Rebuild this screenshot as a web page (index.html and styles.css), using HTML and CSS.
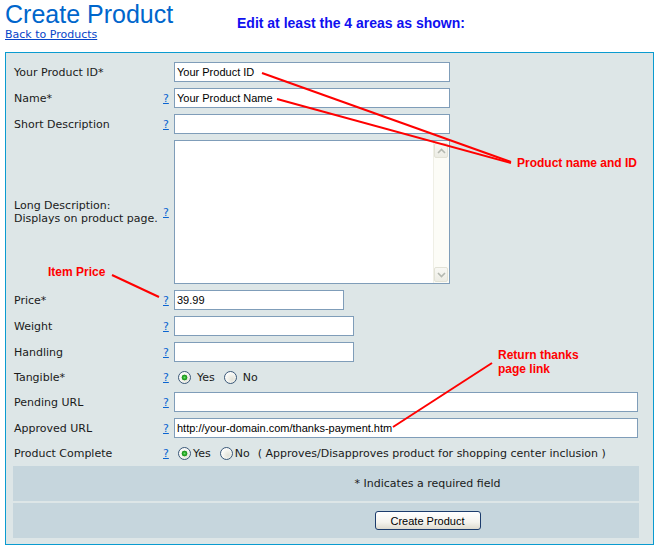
FILE: index.html
```html
<!DOCTYPE html>
<html lang="en">
<head>
<meta charset="utf-8">
<title>Create Product</title>
<link rel="stylesheet" href="styles.css">
</head>
<body>
<div class="page">
  <header class="top">
    <div class="titles">
      <h1 class="title">Create Product</h1>
      <a href="#" class="back">Back to Products</a>
    </div>
    <p class="edit-note">Edit at least the 4 areas as shown:</p>
  </header>

  <form class="panel">
    <div class="fields">
      <div class="row">
        <label class="lbl">Your Product ID*</label><span class="help"></span>
        <div class="ctl"><input class="txt w-lg" type="text" value="Your Product ID"></div>
      </div>
      <div class="row">
        <label class="lbl">Name*</label><a href="#" class="help">?</a>
        <div class="ctl"><input class="txt w-lg" type="text" value="Your Product Name"></div>
      </div>
      <div class="row">
        <label class="lbl">Short Description</label><a href="#" class="help">?</a>
        <div class="ctl"><input class="txt w-lg" type="text" value=""></div>
      </div>
      <div class="row row-tall">
        <label class="lbl lbl-2">Long Description:<br>Displays on product page.</label><a href="#" class="help">?</a>
        <div class="ctl">
          <div class="area-box">
            <textarea class="area"></textarea>
            <div class="vscroll" aria-hidden="true">
              <span class="sb-btn">
                <svg width="9" height="6" viewBox="0 0 9 6"><path d="M1 5 L4.5 1.5 L8 5" fill="none" stroke="#b4b8b0" stroke-width="1.6"/></svg>
              </span>
              <span class="sb-track"></span>
              <span class="sb-btn">
                <svg width="9" height="6" viewBox="0 0 9 6"><path d="M1 1 L4.5 4.5 L8 1" fill="none" stroke="#b4b8b0" stroke-width="1.6"/></svg>
              </span>
            </div>
          </div>
        </div>
      </div>
      <div class="row">
        <label class="lbl">Price*</label><a href="#" class="help">?</a>
        <div class="ctl"><input class="txt w-sm" type="text" value="39.99"></div>
      </div>
      <div class="row">
        <label class="lbl">Weight</label><a href="#" class="help">?</a>
        <div class="ctl"><input class="txt w-md" type="text" value=""></div>
      </div>
      <div class="row">
        <label class="lbl">Handling</label><a href="#" class="help">?</a>
        <div class="ctl"><input class="txt w-md" type="text" value=""></div>
      </div>
      <div class="row row-radio">
        <label class="lbl">Tangible*</label><a href="#" class="help">?</a>
        <div class="ctl radios radios-wide">
          <input class="rad" type="radio" name="tangible" checked><span class="opt">Yes</span>
          <input class="rad rad-2" type="radio" name="tangible"><span class="opt">No</span>
        </div>
      </div>
      <div class="row">
        <label class="lbl">Pending URL</label><a href="#" class="help">?</a>
        <div class="ctl"><input class="txt w-xl" type="text" value=""></div>
      </div>
      <div class="row">
        <label class="lbl">Approved URL</label><a href="#" class="help">?</a>
        <div class="ctl"><input class="txt w-xl" type="text" value="http://your-domain.com/thanks-payment.htm"></div>
      </div>
      <div class="row row-radio">
        <label class="lbl">Product Complete</label><a href="#" class="help">?</a>
        <div class="ctl radios radios-tight">
          <input class="rad" type="radio" name="complete" checked><span class="opt">Yes</span>
          <input class="rad rad-2" type="radio" name="complete"><span class="opt">No</span>
          <span class="opt-note">( Approves/Disapproves product for shopping center inclusion )</span>
        </div>
      </div>
    </div>
    <div class="foot foot-note">* Indicates a required field</div>
    <div class="foot"><button type="button" class="btn">Create Product</button></div>
  </form>

  <svg class="marks" width="657" height="553" viewBox="0 0 657 553" aria-hidden="true">
    <line x1="262" y1="73" x2="511" y2="162"/>
    <line x1="277" y1="99" x2="511" y2="163"/>
    <line x1="112" y1="275" x2="159" y2="297"/>
    <line x1="492" y1="363" x2="393" y2="427"/>
  </svg>
  <div class="callout c-name">Product name and ID</div>
  <div class="callout c-price">Item Price</div>
  <div class="callout c-return">Return thanks<br>page link</div>
</div>
</body>
</html>
```

FILE: styles.css
```css
html, body {
  margin: 0;
  padding: 0;
  background: #ffffff;
}

.page {
  position: relative;
  width: 657px;
  min-height: 553px;
  padding: 0 5px;
  box-sizing: border-box;
  font-family: "DejaVu Sans", Verdana, sans-serif;
  font-size: 11px;
  color: #1a1a1a;
}

/* header */
.top {
  display: flex;
  align-items: flex-start;
}
.titles {
  width: 232px;
}
.title {
  margin: 0;
  font-family: "Liberation Sans", Arial, sans-serif;
  font-size: 25px;
  font-weight: normal;
  line-height: 28px;
  color: #0066cc;
}
.back {
  display: block;
  font-size: 11px;
  line-height: 14px;
  color: #0645c8;
  text-decoration: underline;
}
.edit-note {
  margin: 15px 0 0;
  font-family: "Liberation Sans", Arial, sans-serif;
  font-size: 14px;
  font-weight: bold;
  line-height: 16px;
  color: #1010f0;
}

/* panel */
.panel {
  margin: 10px 0 0;
  width: 649px;
  box-sizing: border-box;
  border: 1px solid #0a9bd0;
  background: #dde6e7;
  padding: 6px 14px 6px 7px;
}

.row {
  display: grid;
  grid-template-columns: 147px 14px 1fr;
  align-items: center;
  height: 26px;
}
.row-tall { height: 150px; }
.row-radio { height: 24px; }

.lbl {
  padding-left: 1px;
  white-space: nowrap;
  line-height: 13px;
}
.help {
  padding-left: 3px;
  color: #0a64d0;
  text-decoration: underline;
  line-height: 13px;
}
.ctl {
  display: flex;
  align-items: center;
}

.txt {
  box-sizing: border-box;
  height: 20px;
  margin: 0;
  border: 1px solid #7f9db9;
  background: #ffffff;
  padding: 0 2px;
  font-family: "Liberation Sans", Arial, sans-serif;
  font-size: 11px;
  color: #000000;
  outline: none;
}
.w-lg { width: 276px; }
.w-sm { width: 170px; }
.w-md { width: 180px; }
.w-xl { width: 464px; }

/* textarea with classic scrollbar */
.area-box {
  box-sizing: border-box;
  width: 276px;
  height: 144px;
  border: 1px solid #7f9db9;
  background: #ffffff;
  display: flex;
}
.area {
  flex: 1;
  min-width: 0;
  margin: 0;
  border: 0;
  padding: 2px;
  resize: none;
  overflow: hidden;
  outline: none;
  background: #ffffff;
  font-family: "Liberation Sans", Arial, sans-serif;
  font-size: 11px;
}
.vscroll {
  width: 16px;
  display: flex;
  flex-direction: column;
  background: #fcfcf7;
  border-left: 1px solid #efefe6;
  box-sizing: border-box;
  padding: 2px 0 1px;
}
.sb-btn {
  box-sizing: border-box;
  height: 15px;
  margin: 0 1px 0 0;
  border: 1px solid #e2e2d6;
  border-radius: 2px;
  background: linear-gradient(#f8f8f4, #ecece4);
  display: flex;
  align-items: center;
  justify-content: center;
}
.sb-track {
  flex: 1;
}

/* radios */
.rad {
  -webkit-appearance: none;
  appearance: none;
  box-sizing: border-box;
  width: 13px;
  height: 13px;
  margin: 0;
  border-radius: 50%;
  border: 1px solid #3a5878;
  background: radial-gradient(circle at 65% 65%, #e2e2d8 0, #f4f4ef 45%, #ffffff 80%);
}
.rad:checked {
  background:
    radial-gradient(circle at 50% 50%, #6ee06e 0, #27a827 1.6px, #1f951f 2.6px, transparent 3.2px),
    radial-gradient(circle at 65% 65%, #e2e2d8 0, #f4f4ef 45%, #ffffff 80%);
}
.radios .rad { margin-left: 4px; }
.radios-wide .rad { margin-right: 6px; }
.radios-wide .rad-2 { margin-left: 9px; }
.radios-tight .rad { margin-right: 2px; }
.radios-tight .rad-2 { margin-left: 9px; }
.opt { line-height: 13px; }
.opt-note {
  margin-left: 8px;
  white-space: nowrap;
  line-height: 13px;
}

/* footer rows */
.foot {
  box-sizing: border-box;
  height: 35px;
  background: #c6d6dd;
  padding-left: 203px;
  display: flex;
  align-items: center;
  justify-content: center;
  margin-top: 2px;
}
.foot-note { margin-top: 1px; }

.btn {
  box-sizing: border-box;
  width: 106px;
  height: 19px;
  padding: 0;
  border: 1px solid #1c3c6c;
  border-radius: 3px;
  background: linear-gradient(#ffffff, #f4f3ee 60%, #dedbcf);
  font-family: "Liberation Sans", Arial, sans-serif;
  font-size: 11px;
  color: #000000;
}

/* annotations */
.marks {
  position: absolute;
  left: 0;
  top: 0;
  pointer-events: none;
}
.marks line {
  stroke: #ff0000;
  stroke-width: 2;
}
.callout {
  position: absolute;
  font-family: "Liberation Sans", Arial, sans-serif;
  font-size: 12px;
  font-weight: bold;
  line-height: 14px;
  color: #ff0000;
  white-space: nowrap;
}
.c-name { left: 517px; top: 156px; }
.c-price { left: 48px; top: 265px; }
.c-return { left: 498px; top: 348px; }
```
